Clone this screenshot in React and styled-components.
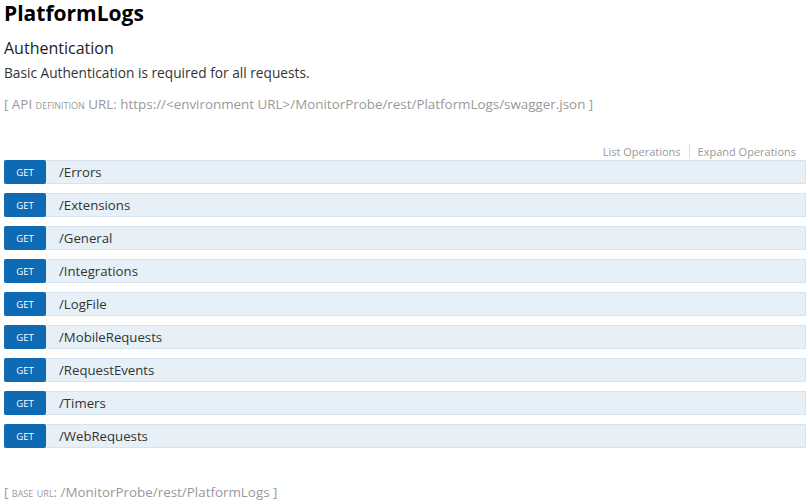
import React from "react";
import styled, { createGlobalStyle } from "styled-components";

const Global = createGlobalStyle`
body {
  margin: 0;
  background: #fff;
  font-family: "Open Sans", "Liberation Sans", sans-serif;
  color: #333;
}
`
const Page = styled.div`
padding: 0 4px 0 4px;
`
const Title = styled.h1`
margin: 0;
font-size: 21px;
font-weight: 700;
line-height: 26px;
color: #000;
`
const SubTitle = styled.h2`
margin: 11px 0 0;
font-size: 16px;
font-weight: 400;
line-height: 22px;
color: #222;
`
const Desc = styled.p`
margin: 5px 0 0;
font-size: 13.7px;
line-height: 17px;
color: #333;
`
const Info = styled.div`
margin-top: ${p => p.top}px;
font-size: 13.4px;
line-height: 18px;
color: #999;
`
const Small = styled.span`
font-variant: small-caps;
text-transform: lowercase;
`
const Ops = styled.div`
display: flex;
justify-content: flex-end;
align-items: center;
margin-top: 31px;
padding-right: 10px;
font-size: 11px;
line-height: 15px;
color: #999;
`
const OpLink = styled.span`
padding: 0 8px;
& + & {
  border-left: 1px solid #ddd;
}
&:last-child { padding-right: 0; }
`
const List = styled.ul`
list-style: none;
margin: 1px 0 0;
padding: 0;
display: flex;
flex-direction: column;
gap: 9px;
`
const Row = styled.li`
display: flex;
align-items: center;
height: 22px;
background: #e7f0f7;
border: 1px solid #d6e4f1;
border-left: none;
`
const Method = styled.span`
display: flex;
align-items: center;
justify-content: center;
width: 42px;
height: 24px;
margin: -1px 0;
background: #0f6ab4;
border-radius: 2px;
color: #fff;
font-size: 9.5px;
font-weight: 400;
`
const Path = styled.span`
padding-left: 13px;
font-size: 13.2px;
color: #333;
`

const paths = ["/Errors", "/Extensions", "/General", "/Integrations", "/LogFile", "/MobileRequests", "/RequestEvents", "/Timers", "/WebRequests"];

export default function App() {
  return (
    <Page>
      <Global />
      <Title>PlatformLogs</Title>
      <SubTitle>Authentication</SubTitle>
      <Desc>Basic Authentication is required for all requests.</Desc>
      <Info top={14}>[ API <Small>Definition</Small> URL: https://&lt;environment URL&gt;/MonitorProbe/rest/PlatformLogs/swagger.json ]</Info>
      <Ops>
        <OpLink>List Operations</OpLink>
        <OpLink>Expand Operations</OpLink>
      </Ops>
      <List>
        {paths.map(p => (
          <Row key={p}>
            <Method>GET</Method>
            <Path>{p}</Path>
          </Row>
        ))}
      </List>
      <Info top={35}>[ <Small>Base URL</Small>: /MonitorProbe/rest/PlatformLogs ]</Info>
    </Page>
  );
}
